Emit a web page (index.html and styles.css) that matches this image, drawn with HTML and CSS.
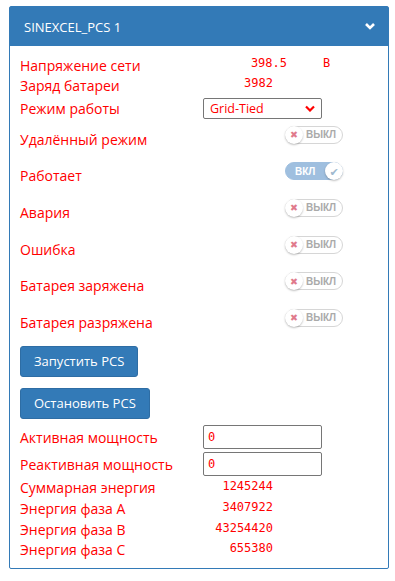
FILE: index.html
```html
<!doctype html>
<html lang="ru">
	<head>
		<meta charset="UTF-8" />
		<meta name="viewport" content="width=device-width, initial-scale=1.0" />
		<title>SINEXCEL_PCS 1</title>
		<link rel="stylesheet" href="styles.css">
	</head>
	<body>
		<div class="panel">
			<div class="panel-heading">
				<span class="panel-title">SINEXCEL_PCS 1</span>
				<svg class="chevron" width="10" height="8" viewBox="0 0 10 8">
					<path d="M1 2 L5 6 L9 2" fill="none" stroke="#fff" stroke-width="2.6" />
				</svg>
			</div>
			<div class="panel-body">
				<!-- Measurements -->
				<div class="row row-text">
					<span class="label">Напряжение сети</span>
					<span class="value value-wide">398.5</span>
					<span class="unit">В</span>
				</div>
				<div class="row row-text">
					<span class="label">Заряд батареи</span>
					<span class="value">3982</span>
				</div>
				<div class="row row-select">
					<span class="label">Режим работы</span>
					<div class="select">
						<span>Grid-Tied</span>
						<svg width="10" height="7" viewBox="0 0 10 7">
							<path d="M1 1.5 L5 5.5 L9 1.5" fill="none" stroke="#f00" stroke-width="2.2" />
						</svg>
					</div>
				</div>

				<!-- Status switches -->
				<div class="row row-switch">
					<span class="label">Удалённый режим</span>
					<div class="switch"><span class="knob">✖</span><span class="switch-text">ВЫКЛ</span></div>
				</div>
				<div class="row row-switch">
					<span class="label">Работает</span>
					<div class="switch on"><span class="switch-text">ВКЛ</span><span class="knob">✔</span></div>
				</div>
				<div class="row row-switch">
					<span class="label">Авария</span>
					<div class="switch"><span class="knob">✖</span><span class="switch-text">ВЫКЛ</span></div>
				</div>
				<div class="row row-switch">
					<span class="label">Ошибка</span>
					<div class="switch"><span class="knob">✖</span><span class="switch-text">ВЫКЛ</span></div>
				</div>
				<div class="row row-switch">
					<span class="label">Батарея заряжена</span>
					<div class="switch"><span class="knob">✖</span><span class="switch-text">ВЫКЛ</span></div>
				</div>
				<div class="row row-switch">
					<span class="label">Батарея разряжена</span>
					<div class="switch"><span class="knob">✖</span><span class="switch-text">ВЫКЛ</span></div>
				</div>

				<!-- Commands -->
				<div class="buttons">
					<button class="btn">Запустить PCS</button>
					<button class="btn">Остановить PCS</button>
				</div>

				<div class="row row-input">
					<span class="label">Активная мощность</span>
					<input class="field" type="text" value="0" />
				</div>
				<div class="row row-input">
					<span class="label">Реактивная мощность</span>
					<input class="field" type="text" value="0" />
				</div>

				<!-- Energy -->
				<div class="row row-energy">
					<span class="label">Суммарная энергия</span>
					<span class="value">1245244</span>
				</div>
				<div class="row row-energy">
					<span class="label">Энергия фаза А</span>
					<span class="value">3407922</span>
				</div>
				<div class="row row-energy">
					<span class="label">Энергия фаза В</span>
					<span class="value">43254420</span>
				</div>
				<div class="row row-energy">
					<span class="label">Энергия фаза С</span>
					<span class="value">655380</span>
				</div>
			</div>
		</div>
	</body>
</html>
```

FILE: styles.css
```css
body {
	margin: 0;
	background-color: #fff;
	font-family: "Open Sans", "DejaVu Sans", sans-serif;
}
.panel {
	width: 380px;
	margin: 6px 0 0 9px;
	box-sizing: border-box;
	border: 1px solid #337ab7;
	border-radius: 2px;
}
.panel-heading {
	display: flex;
	justify-content: space-between;
	align-items: center;
	height: 39px;
	padding: 0 13px 0 14px;
	background-color: #337ab7;
	color: #fff;
}
.panel-title {
	font-size: 13px;
	margin-top: 1px;
}
.chevron {
	margin-top: -2px;
}
.panel-body {
	padding: 9px 10px 8px 10px;
}
.row {
	display: flex;
	align-items: center;
}
.label {
	width: 183px;
	flex-shrink: 0;
	color: #f00;
	font-size: 14px;
}
.value {
	width: 70px;
	text-align: right;
	color: #f00;
	font-family: "DejaVu Sans Mono", monospace;
	font-size: 12px;
}
.value-wide {
	width: 84px;
}
.unit {
	margin-left: 36px;
	color: #f00;
	font-family: "DejaVu Sans Mono", monospace;
	font-size: 12px;
}
.row-text {
	height: 20px;
}
.row-text .value,
.row-text .unit {
	margin-top: -4px;
}
.row-select {
	height: 26px;
}
.select {
	display: flex;
	justify-content: space-between;
	align-items: center;
	box-sizing: border-box;
	width: 119px;
	height: 21px;
	padding: 0 6px 0 6px;
	border: 1px solid #767676;
	border-radius: 2px;
	color: #f00;
	font-size: 12.5px;
}
.row-switch {
	height: 36.6px;
}
.switch {
	position: relative;
	display: flex;
	align-items: center;
	box-sizing: border-box;
	width: 58px;
	height: 18px;
	margin-left: 82px;
	margin-bottom: 9px;
	border: 1px solid #d6d6d6;
	border-radius: 9px;
	background-color: #fff;
}
.knob {
	display: flex;
	justify-content: center;
	align-items: center;
	width: 18px;
	height: 18px;
	margin: -1px 0 -1px -1px;
	border-radius: 50%;
	background-color: #fff;
	box-shadow: 0 1px 2px rgba(0, 0, 0, 0.25);
	color: #e07a8c;
	font-size: 9.5px;
}
.switch-text {
	margin-left: 3px;
	color: #aaa;
	font-family: "Liberation Sans", Arial, sans-serif;
	font-size: 10px;
	font-weight: bold;
}
.switch.on {
	border-color: #9fbfdf;
	background-color: #9fbfdf;
	justify-content: space-between;
}
.switch.on .switch-text {
	margin-left: 9px;
	color: #fff;
}
.switch.on .knob {
	margin: -1px -1px -1px 0;
	color: #9fb9cf;
	font-size: 11px;
}
.buttons {
	display: flex;
	flex-direction: column;
	align-items: flex-start;
	gap: 11px;
	margin: 5px 0 5px 0;
}
.btn {
	height: 31px;
	padding: 0 13px;
	border: 1px solid #2e6da4;
	border-radius: 3px;
	background-color: #337ab7;
	color: #fff;
	font-family: "Open Sans", sans-serif;
	font-size: 13px;
}
.row-input {
	height: 27px;
}
.field {
	box-sizing: border-box;
	width: 119px;
	height: 24px;
	padding: 0 4px;
	border: 1px solid #767676;
	border-radius: 2px;
	color: #f00;
	font-family: "DejaVu Sans Mono", monospace;
	font-size: 12px;
}
.row-energy {
	height: 20.7px;
}
.row-energy .value {
	margin-top: -3px;
}
```
